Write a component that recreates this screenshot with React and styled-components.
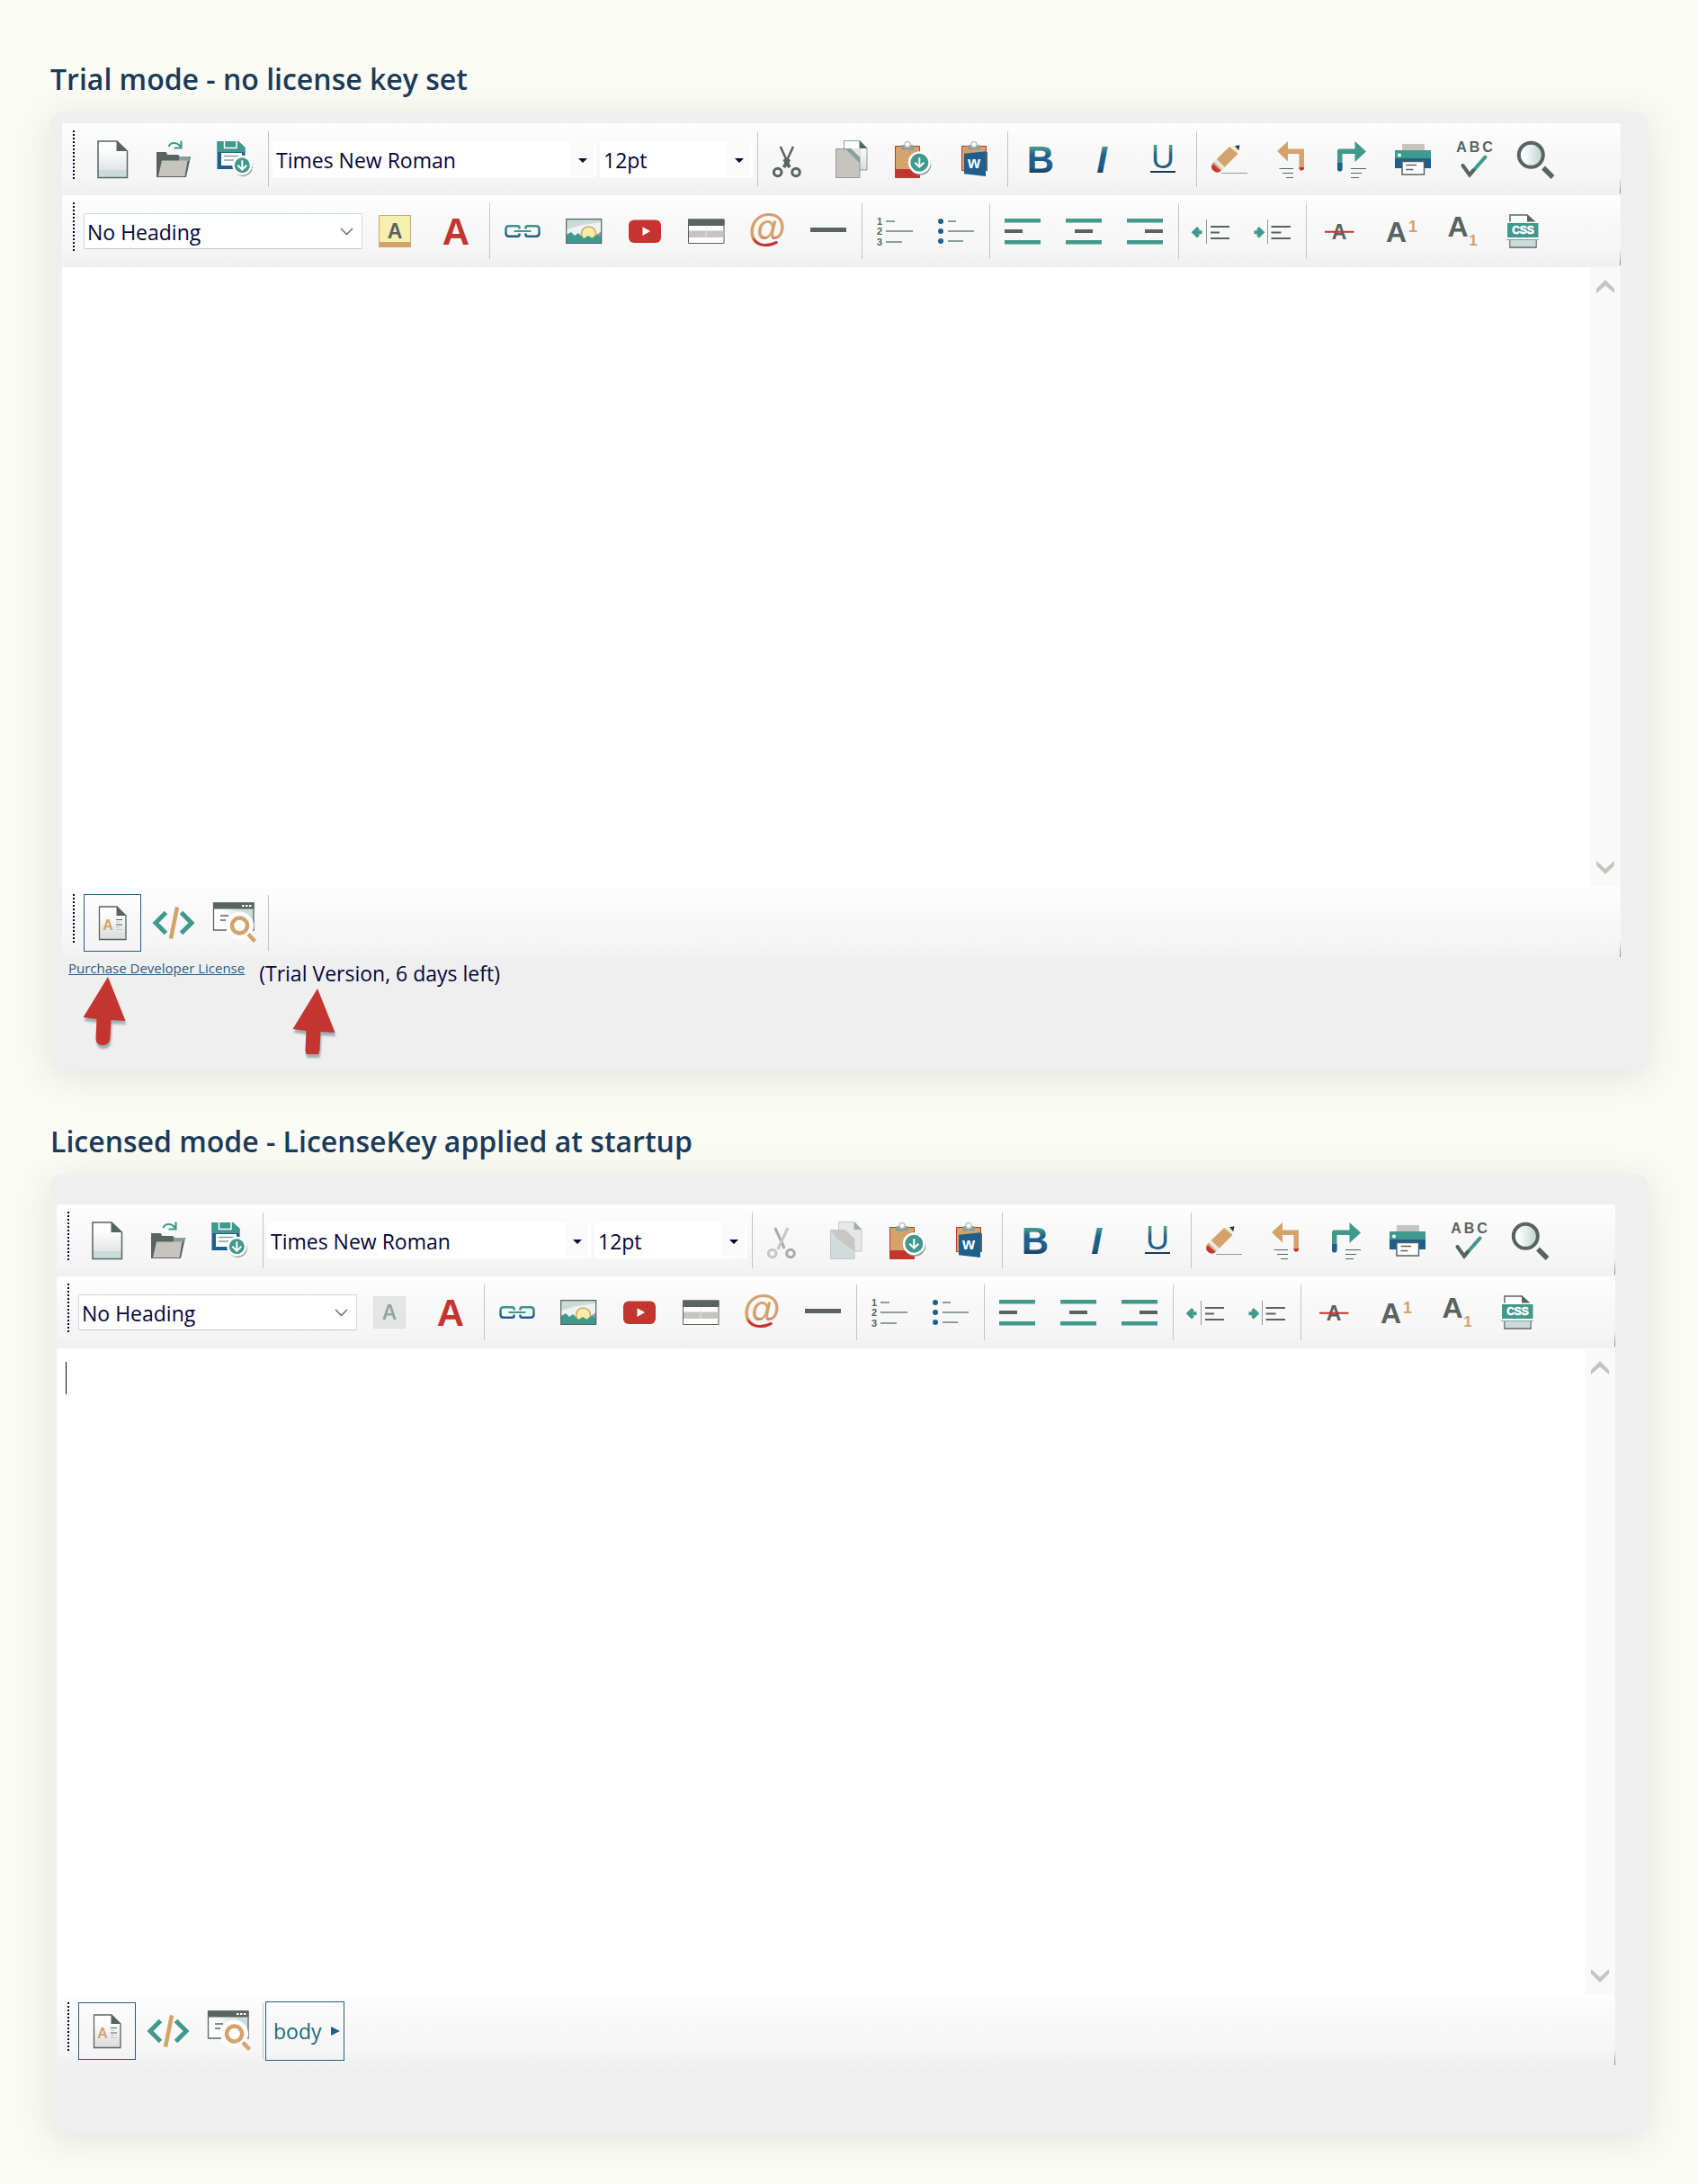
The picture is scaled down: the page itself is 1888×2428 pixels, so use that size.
import styled, { createGlobalStyle } from "styled-components"

const GlobalStyle = createGlobalStyle`
    :root {
        --ink: #05053a;
        --navy: #1b3a58;
        --blue: #1f5f8b;
        --teal: #3f998c;
        --slate: #576461;
        --steel: #8a9f9d;
        --stone: #c6c4be;
        --mist: #cbdbd9;
        --sand: #d4a26b;
        --red: #c5352f;
    }

    * {
        box-sizing: border-box;
    }

    body {
        margin: 0;
        background: #fafbf5;
        color: var(--ink);
        font-family: "Open Sans", "Noto Sans", sans-serif;
        font-size: 23px;
    }
`

const Page = styled.main`
    display: flex;
    flex-direction: column;
    gap: 53px;
    padding: 62px 56px 56px;
`

const Title = styled.h2`
    margin: 0 0 11px;
    color: var(--navy);
    font-size: 32px;
    font-weight: 600;
    line-height: 52px;
`

const Panel = styled.div`
    padding: ${({ $inset }) => $inset};
    border-radius: 12px;
    background: #efefef;
    box-shadow: 0 6px 40px rgba(70, 75, 40, 0.13);
`

const Toolbar = styled.div`
    display: flex;
    flex-wrap: wrap;
    align-items: center;
    gap: 4px;
    min-height: 80px;
    padding: 8px 12px;
    border-radius: 3px;
    background:
        linear-gradient(transparent, #7d8785) right bottom 2px / 1px 18px no-repeat,
        linear-gradient(#fefefe, #f8f8f8 40%, #f6f6f6 75%, #f0f0f0);
`

const Grip = styled.span`
    align-self: flex-start;
    width: 2px;
    height: 54px;
    margin-right: 6px;
    background: repeating-linear-gradient(var(--ink) 0 2px, transparent 2px 4px);
`

const Separator = styled.span`
    width: 2px;
    height: 62px;
    border-right: 1px solid var(--stone);
`

const ToolButton = styled.button`
    width: 64px;
    height: 64px;
    padding: 0;
    border: 1px solid ${({ $active }) => ($active ? "var(--blue)" : "transparent")};
    background: none;

    svg {
        display: block;
        width: 64px;
        height: 64px;
        margin: -1px;
    }

    &:disabled svg {
        opacity: 0.5;
    }
`

const TagButton = styled.button`
    display: flex;
    align-items: center;
    justify-content: space-between;
    width: 88px;
    height: 66px;
    margin: -2px;
    padding: 0 4px 0 8px;
    border: 1px solid var(--blue);
    background: none;
    color: #216a78;
    font: inherit;
`

const SelectBox = styled.label`
    display: grid;
    align-items: center;
    width: ${({ $width }) => $width}px;
    height: 40px;
    border: 1px solid ${({ $outlined }) => ($outlined ? "var(--mist)" : "transparent")};
    border-bottom-color: ${({ $outlined }) => ($outlined ? "var(--stone)" : "transparent")};
    border-radius: 2px;
    background: #fff;

    select, svg {
        grid-area: 1 / 1;
    }

    select {
        width: 100%;
        height: 38px;
        padding: 1px 30px 0 3px;
        border: 0;
        appearance: none;
        background: none;
        color: inherit;
        font: inherit;
    }

    svg {
        justify-self: end;
        pointer-events: none;
    }
`

const Editor = styled.div`
    position: relative;
    display: flex;
    height: ${({ $height }) => $height}px;
    background: #fff;

    textarea {
        flex: 1;
        padding: 12px 10px;
        border: 0;
        outline: 0;
        resize: none;
        background: none;
        font: 24px "Liberation Serif", serif;
    }
`

const Caret = styled.span`
    position: absolute;
    top: 15px;
    left: 10px;
    width: 1px;
    height: 36px;
    background: var(--ink);
`

const Scrollbar = styled.div`
    display: flex;
    flex-direction: column;
    justify-content: space-between;
    align-items: center;
    width: 34px;
    padding: 11px 0;
    background: #f9f9f9;

    svg {
        display: block;
    }
`

const Footer = styled.div`
    display: flex;
    gap: 16px;
    min-height: ${({ $height }) => $height}px;
    padding-left: 7px;
`

const FooterItem = styled.div`
    svg {
        display: block;
        margin-left: ${({ $arrow }) => $arrow}px;
        filter: drop-shadow(1px 4px 1px #8a9f9dcc);
    }
`

const LicenseLink = styled.a`
    display: block;
    color: var(--blue);
    font-size: 15px;
    line-height: 20px;
`

const TrialText = styled.p`
    margin: 0;
    line-height: 33px;
`

const DefsSvg = styled.svg`
    display: block;
    height: 0;
    margin-bottom: -53px;
`

const SharedDefs = () => (
    <DefsSvg aria-hidden="true">
        <defs>
            <linearGradient id="sheet" x2="0" y2="1">
                <stop offset="0.2" stopColor="#fff" />
                <stop offset="1" stopColor="#d9dcdb" />
            </linearGradient>
            <linearGradient id="letter" gradientUnits="userSpaceOnUse" x1="0" y1="16" x2="0" y2="48">
                <stop offset="0.1" stopColor="#3f998c" />
                <stop offset="0.35" stopColor="#1f5f8b" />
                <stop offset="0.75" stopColor="#1f5f8b" />
                <stop offset="1" stopColor="#1b3a58" />
            </linearGradient>
            <linearGradient id="chain" gradientUnits="userSpaceOnUse" x1="0" y1="25" x2="0" y2="40">
                <stop offset="0" stopColor="#3f998c" />
                <stop offset="0.8" stopColor="#1f5f8b" />
            </linearGradient>
            <linearGradient id="mail" gradientUnits="userSpaceOnUse" x1="0" y1="38" x2="0" y2="43">
                <stop offset="0" stopColor="#d4a26b" />
                <stop offset="1" stopColor="#c5352f" />
            </linearGradient>
            <linearGradient id="glass" x2="1" y2="0">
                <stop offset="0.2" stopColor="#fff" />
                <stop offset="0.8" stopColor="#cbdbd9" />
            </linearGradient>
        </defs>
    </DefsSvg>
)

const Glyph = ({ x = 32, y, size, fill = "var(--slate)", weight = 700, children, ...rest }) => (
    <text x={x} y={y} fontSize={size} fontWeight={weight} fill={fill} textAnchor="middle" fontFamily="Liberation Sans, Arial, sans-serif" {...rest}>
        {children}
    </text>
)

const Badge = ({ cx, cy, r }) => (
    <>
        <circle cx={cx + 1} cy={cy + 2} r={r + 2} fill="var(--steel)" />
        <circle cx={cx} cy={cy} r={r + 2.5} fill="#fff" />
        <circle cx={cx} cy={cy} r={r} fill="var(--teal)" />
        <path d={`M${cx} ${cy - 5.5}v10M${cx - 5} ${cy}l5 5 5-5`} fill="none" stroke="#fff" strokeWidth="2" />
    </>
)

const Clip = ({ x }) => (
    <>
        <path d={`M${x - 7} 21.500v-4q0-1.500 2-1.500h10q2 0 2 1.500v4z`} fill="var(--steel)" />
        <circle cx={x} cy="15.500" r="3" fill="#fff" stroke="var(--stone)" strokeWidth="1.500" />
    </>
)

const icons = {
    new: (
        <>
            <path d="M16 12h21l11.500 11v29.500H16z" fill="url(#sheet)" />
            <path d="M16 44h32v8H16z" fill="var(--mist)" />
            <path d="M16 12h21l11.500 11v29.500H16z" fill="none" stroke="var(--slate)" strokeWidth="1.500" />
            <path d="M36.500 11.500v11.500h12z" fill="var(--slate)" />
        </>
    ),
    open: (
        <>
            <path d="M13 24h11l1 3h12l2 2h12l-5 23H13z" fill="var(--slate)" />
            <path d="M38 29h12l-1 5H38z" fill="var(--steel)" />
            <path d="M19 33.500h28.500l-3 17.500H15z" fill="var(--stone)" />
            <path d="M26.500 18q1.500-4 6-4t7 4M40.500 11.500v8h-8" fill="none" stroke="var(--teal)" strokeWidth="2.200" />
        </>
    ),
    save: (
        <>
            <path d="M12.500 12H36l7.500 7v24h-31z" fill="var(--blue)" />
            <path d="M12.500 12H36l7.500 7v5h-31z" fill="var(--teal)" />
            <path d="M20.500 12v7.500H34V12" fill="var(--teal)" stroke="#fff" strokeWidth="1.500" />
            <path d="M17 25h23v14H17z" fill="#fff" />
            <path d="M20 28.500h17M20 33h11" stroke="var(--steel)" strokeWidth="1.500" />
            <Badge cx={40.3} cy={38.7} r={8.5} />
        </>
    ),
    cut: (
        <g fill="none" stroke="var(--slate)">
            <path d="M20.700 18l9.300 20M35 18l-9.300 20" strokeWidth="2.500" />
            <path d="M25 32l6 9M30.500 32l-6 9" strokeWidth="4" />
            <circle cx="17.700" cy="46.500" r="4.300" strokeWidth="3" />
            <circle cx="38" cy="46.500" r="4.300" strokeWidth="3" />
        </g>
    ),
    copy: (
        <>
            <path d="M23.500 11.500H41l8 8.500v24H23.500z" fill="url(#sheet)" stroke="var(--steel)" />
            <path d="M40.500 11v9H49.500z" fill="var(--slate)" />
            <path d="M14.500 20.500H41v32H14.500z" fill="var(--stone)" stroke="var(--steel)" />
            <path d="M25 20.500l16 16v-7l-9-9z" fill="var(--steel)" />
            <path d="M31 20h10.500v10z" fill="#e2e7e6" />
        </>
    ),
    paste: (
        <>
            <path d="M12.500 17.500h27v35h-27z" fill="var(--sand)" stroke="var(--red)" />
            <path d="M12.500 43h27v9.500h-27z" fill="var(--red)" />
            <Clip x={26} />
            <Badge cx={39.3} cy={35.7} r={10} />
        </>
    ),
    pasteWord: (
        <>
            <path d="M18.500 17.500h27v27h-27z" fill="var(--sand)" stroke="var(--red)" />
            <path d="M44 24h3v21h-3z" fill="var(--slate)" />
            <Clip x={32} />
            <path d="M21 25.700l24-2.400v27.700l-24-2.700z" fill="var(--blue)" />
            <Glyph y="42" size="18" fill="#fff">w</Glyph>
        </>
    ),
    bold: <Glyph y="46.500" size="42" fill="url(#letter)">B</Glyph>,
    italic: <Glyph y="46.500" size="42" fill="url(#letter)" fontStyle="italic">I</Glyph>,
    underline: (
        <>
            <Glyph y="42" size="36" weight="400" fill="url(#letter)">U</Glyph>
            <path d="M18 46h28" stroke="var(--navy)" strokeWidth="2" />
        </>
    ),
    pencil: (
        <>
            <path d="M23 47.500h29" stroke="var(--steel)" />
            <path d="M32 18l11-1.500-2.500 10z" fill="#f3ead2" />
            <path d="M38 17.200l5.500-1-1.200 6z" fill="var(--navy)" />
            <path d="M32 18l9.500 8L22 45.500q-4 3-8-1t-1-8z" fill="var(--sand)" />
            <path d="M14 37.500l8.500 7.500q-4 3-8.500-.5-3.500-3.500 0-7z" fill="var(--red)" />
            <path d="M17.500 31.500l9.500 9.500-3 3-9.500-9.500z" fill="#e6e8e6" />
        </>
    ),
    undo: (
        <>
            <path d="M17 23l12-11v8.500h18V42h-5.500V26H29v8.500z" fill="var(--sand)" />
            <path d="M41.500 41H47v2l-2 1.500h-2l-1.500-1.500z" fill="var(--red)" />
            <path d="M19.500 42.500H35M23 47.500h12M27 52.500h8" stroke="var(--slate)" />
        </>
    ),
    redo: (
        <>
            <path d="M48 23.500L35.500 12v8.500H18L16 22v20h5.500V26h14v9z" fill="var(--teal)" />
            <path d="M16 36h5.500v8l-1.500 1.500h-2.500L16 44z" fill="var(--blue)" />
            <path d="M31 42.500h17M31 47.500h12M31 52.500h9" stroke="var(--slate)" />
        </>
    ),
    print: (
        <>
            <path d="M20 15h25v8H20z" fill="var(--stone)" />
            <path d="M12 22h40v20H12z" fill="var(--blue)" />
            <path d="M12 22h40v9H12z" fill="var(--teal)" />
            <circle cx="17" cy="27.500" r="2" fill="#fff" />
            <path d="M20 34.500h24.500V49H20z" fill="#fff" stroke="var(--slate)" strokeWidth="1.500" />
            <path d="M24.500 38.500H36M24.500 43.500h8" stroke="var(--slate)" strokeWidth="1.500" />
        </>
    ),
    spell: (
        <>
            <Glyph x="18" y="23.500" size="16">A</Glyph>
            <Glyph x="32.500" y="23.500" size="16">B</Glyph>
            <Glyph x="47" y="23.500" size="16">C</Glyph>
            <path d="M27 49.500l17.500-20" stroke="var(--teal)" strokeWidth="4" strokeLinecap="round" />
            <path d="M19.500 39l7.500 10.500 4-5" fill="none" stroke="var(--slate)" strokeWidth="4" strokeLinecap="round" />
        </>
    ),
    find: (
        <>
            <circle cx="27.300" cy="27.300" r="13.500" fill="url(#glass)" stroke="var(--slate)" strokeWidth="4" />
            <path d="M41 41.500L51.500 52" stroke="var(--slate)" strokeWidth="5.500" />
        </>
    ),
    highlight: (
        <>
            <path d="M14.500 14.500h35v35h-35z" fill="#f6f0ae" stroke="var(--sand)" />
            <path d="M14 44h36v6H14z" fill="var(--sand)" />
            <Glyph y="40" size="23">A</Glyph>
        </>
    ),
    color: <Glyph y="46.500" size="42" fill="var(--red)">A</Glyph>,
    link: (
        <g fill="none" stroke="url(#chain)" strokeWidth="2.500">
            <path d="M28.500 29.500V28q0-1.700-2-1.700H17q-3.500 0-3.500 3.500v4.500q0 3.500 3.500 3.500h9.500q2 0 2-1.700v-1.600" />
            <path d="M35.500 29.500V28q0-1.700 2-1.700H47q3.500 0 3.500 3.500v4.500q0 3.500-3.500 3.500h-9.500q-2 0-2-1.700v-1.600" />
            <path d="M22.500 31h19v2h-19z" fill="var(--teal)" stroke="none" />
        </g>
    ),
    image: (
        <>
            <path d="M13 19h39v26H13z" fill="#eef3f1" />
            <path d="M13 19h39v3L30 25l-17 5z" fill="var(--mist)" />
            <circle cx="37.500" cy="35" r="8" fill="#f6eda4" stroke="var(--sand)" strokeWidth="1.500" />
            <path d="M52 32v13H36l7-7z" fill="var(--steel)" />
            <path d="M13 36l5-3 4 4 4-3 6 6 5-3 5 3 5-4 5 3v6H13z" fill="var(--teal)" />
            <path d="M12.700 18.700h39v26.800h-39z" fill="none" stroke="var(--slate)" strokeWidth="1.200" />
        </>
    ),
    video: (
        <>
            <rect x="14" y="19.500" width="36" height="25.500" rx="6" fill="var(--red)" />
            <path d="M29.500 27.300L38 32l-8.500 5z" fill="#fff" />
        </>
    ),
    table: (
        <>
            <path d="M12.500 19h39.500v26.500H12.500z" fill="#fff" stroke="var(--slate)" />
            <path d="M12 18.500h40.500V26H12z" fill="var(--slate)" />
            <path d="M13 31.500h38.500V39H13z" fill="var(--stone)" />
            <path d="M32 26v13" stroke="#e4e4e0" />
        </>
    ),
    at: <Glyph y="43" size="43" fill="url(#mail)">@</Glyph>,
    rule: <path d="M12 28h40v5H12z" fill="var(--slate)" />,
    numbered: (
        <>
            <Glyph x="15" y="24.500" size="11">1</Glyph>
            <Glyph x="15" y="36" size="11">2</Glyph>
            <Glyph x="15" y="47.500" size="11">3</Glyph>
            <path d="M22 21h10M22 32h30M22 44h18" stroke="var(--steel)" strokeWidth="2" />
        </>
    ),
    bullets: (
        <>
            <g fill="var(--blue)">
                <circle cx="15" cy="21" r="3" />
                <circle cx="15" cy="32" r="3" />
                <circle cx="15" cy="43" r="3" />
            </g>
            <path d="M23 21h9M23 32h29M23 43h17" stroke="var(--steel)" strokeWidth="2" />
        </>
    ),
    left: (
        <>
            <path d="M12 18h40v4.500H12zM12 42h40v4.500H12z" fill="var(--teal)" />
            <path d="M12 30h20v4H12z" fill="var(--slate)" />
        </>
    ),
    center: (
        <>
            <path d="M12 18h40v4.500H12zM12 42h40v4.500H12z" fill="var(--teal)" />
            <path d="M22 30h20v4H22z" fill="var(--slate)" />
        </>
    ),
    right: (
        <>
            <path d="M12 18h40v4.500H12zM12 42h40v4.500H12z" fill="var(--teal)" />
            <path d="M32 30h20v4H32z" fill="var(--slate)" />
        </>
    ),
    outdent: (
        <>
            <path d="M17.500 28.500l-5 4.800 5 4.800M12.500 33.300h9" fill="none" stroke="var(--teal)" strokeWidth="4" />
            <path d="M26.500 19v27" stroke="var(--steel)" />
            <path d="M31 27h21M31 33.500h10M31 40h21" stroke="var(--slate)" strokeWidth="2" />
        </>
    ),
    indent: (
        <>
            <path d="M15.500 28.500l5 4.800-5 4.800M20.500 33.300h-9" fill="none" stroke="var(--teal)" strokeWidth="4" />
            <path d="M26.500 19v27" stroke="var(--steel)" />
            <path d="M30.500 27h21.500M30.500 33.500h11M30.500 40h21.500" stroke="var(--slate)" strokeWidth="2" />
        </>
    ),
    strike: (
        <>
            <Glyph y="40.500" size="23">A</Glyph>
            <path d="M16 32.700h32.500" stroke="var(--red)" strokeWidth="2" />
        </>
    ),
    superscript: (
        <>
            <Glyph x="27.500" y="44" size="32">A</Glyph>
            <Glyph x="46" y="33.300" size="18" fill="var(--sand)">1</Glyph>
        </>
    ),
    subscript: (
        <>
            <Glyph x="28" y="38.300" size="32">A</Glyph>
            <Glyph x="45" y="47.700" size="17" fill="var(--sand)">1</Glyph>
        </>
    ),
    css: (
        <>
            <path d="M18 14h19l10 9v27H18z" fill="#fff" stroke="var(--slate)" strokeWidth="1.500" />
            <path d="M37 13.500v9h10z" fill="var(--slate)" />
            <path d="M18.500 42h28v7h-28z" fill="var(--mist)" />
            <path d="M14 21.500h36v20.500H14z" fill="#fff" />
            <path d="M15 23h34.500v16H15z" fill="var(--teal)" />
            <path d="M14 41.500h36" stroke="var(--steel)" />
            <Glyph x="32.500" y="35.200" size="12" fill="#fff" stroke="#fff" strokeWidth="0.600">CSS</Glyph>
        </>
    ),
    design: (
        <>
            <path d="M17.500 14H37l10 10v26.500H17.500z" fill="url(#sheet)" stroke="var(--slate)" strokeWidth="1.300" />
            <path d="M36.500 13.500V24H47.500z" fill="var(--slate)" />
            <Glyph x="27" y="40" size="16" fill="var(--sand)">A</Glyph>
            <path d="M36 28.500h7M36 34h7" stroke="var(--slate)" />
            <path d="M36 31.200h4M36 36.700h4M36 39.500h7" stroke="var(--stone)" />
        </>
    ),
    html: (
        <>
            <path d="M23.500 20.500L12 32l11.500 11.500M40.500 20.500L52 32l-11.500 11.500" fill="none" stroke="var(--teal)" strokeWidth="5" />
            <path d="M36 14.500L29 49.500" stroke="var(--sand)" strokeWidth="4.500" />
        </>
    ),
    preview: (
        <>
            <path d="M8.500 10H53v30H8.500z" fill="url(#glass)" stroke="var(--slate)" strokeWidth="1.300" />
            <path d="M8 9.500h45.500v7H8z" fill="var(--slate)" />
            <path d="M40 13h2.500M44 13h2.500M48 13h2.500" stroke="#fff" strokeWidth="2" />
            <path d="M16 24h9M16 29h6" stroke="var(--slate)" strokeWidth="1.500" />
            <circle cx="37.500" cy="35" r="15.500" fill="#fff" />
            <circle cx="37.500" cy="35" r="8.500" fill="#fff" stroke="var(--sand)" strokeWidth="4.500" />
            <path d="M47 44.500l7.500 8" stroke="var(--sand)" strokeWidth="4.500" />
        </>
    ),
}

// greyed versions, drawn at half opacity by the disabled button
const disabledIcons = {
    cut: (
        <g fill="none">
            <path d="M20.700 18l9.300 20 1 3" stroke="var(--slate)" strokeWidth="3" />
            <circle cx="38" cy="46.500" r="4.300" stroke="var(--slate)" strokeWidth="3" />
            <path d="M35 18l-9.300 20-2 4" stroke="#999791" strokeWidth="3" />
            <circle cx="17.700" cy="46.500" r="4.300" stroke="#999791" strokeWidth="3" />
        </g>
    ),
    copy: (
        <>
            <path d="M23.500 11.500H41l8 8.500v24H23.500z" fill="#d5dad8" stroke="#999791" />
            <path d="M40.500 11v9H49.500z" fill="var(--slate)" />
            <path d="M14.500 20.500H41v32H14.500z" fill="#a9c3c0" stroke="#999791" />
            <path d="M15 21h17l9 9v14L22 30z" fill="#999791" />
            <path d="M31 20h10.500v10z" fill="#d5dad8" />
        </>
    ),
    highlight: (
        <>
            <path d="M14.500 14.500h35v35h-35z" fill="#d0d6d4" stroke="#b9ccc9" />
            <Glyph y="40" size="23" fill="#3a5550">A</Glyph>
        </>
    ),
}

const Tools = ({ items, off = [], active }) =>
    items.map(([name, label]) => {
        const disabled = off.includes(name)
        return (
            <ToolButton key={name} type="button" aria-label={label} title={label} disabled={disabled} $active={name === active}>
                <svg viewBox="0 0 64 64" aria-hidden="true">{disabled ? disabledIcons[name] : icons[name]}</svg>
            </ToolButton>
        )
    })

const Combo = ({ label, value, width }) => (
    <SelectBox $width={width}>
        <select aria-label={label} defaultValue={value}>
            <option>{value}</option>
        </select>
        <svg width="28" height="38" aria-hidden="true">
            <path d="M0 0h26v37H0z" fill="#fafafa" />
            <path d="M9 18h10l-5 5z" fill="var(--ink)" />
        </svg>
    </SelectBox>
)

const HeadingSelect = () => (
    <SelectBox $width={310} $outlined>
        <select aria-label="Heading" defaultValue="No Heading">
            <option>No Heading</option>
        </select>
        <svg width="32" height="38" aria-hidden="true">
            <path d="M9 16l6.500 6.500L22 16" fill="none" stroke="var(--slate)" strokeWidth="1.300" />
        </svg>
    </SelectBox>
)

const fileTools = [["new", "New"], ["open", "Open"], ["save", "Save"]]
const clipboardTools = [["cut", "Cut"], ["copy", "Copy"], ["paste", "Paste"], ["pasteWord", "Paste from Word"]]
const styleTools = [["bold", "Bold"], ["italic", "Italic"], ["underline", "Underline"]]
const editTools = [["pencil", "Clear formatting"], ["undo", "Undo"], ["redo", "Redo"], ["print", "Print"], ["spell", "Spell check"], ["find", "Find"]]
const colorTools = [["highlight", "Highlight"], ["color", "Font color"]]
const insertTools = [["link", "Link"], ["image", "Image"], ["video", "Video"], ["table", "Table"], ["at", "Symbol"], ["rule", "Horizontal rule"]]
const listTools = [["numbered", "Numbered list"], ["bullets", "Bulleted list"]]
const alignTools = [["left", "Align left"], ["center", "Align center"], ["right", "Align right"]]
const indentTools = [["outdent", "Outdent"], ["indent", "Indent"]]
const scriptTools = [["strike", "Strikethrough"], ["superscript", "Superscript"], ["subscript", "Subscript"], ["css", "Style sheet"]]
const viewTools = [["design", "Design"], ["html", "HTML"], ["preview", "Preview"]]

const HtmlEditor = ({ height, off, caret, tag }) => (
    <>
        <Toolbar>
            <Grip />
            <Tools items={fileTools} />
            <Separator />
            <Combo label="Font" value="Times New Roman" width={360} />
            <Combo label="Font size" value="12pt" width={170} />
            <Separator />
            <Tools items={clipboardTools} off={off} />
            <Separator />
            <Tools items={styleTools} />
            <Separator />
            <Tools items={editTools} />
        </Toolbar>
        <Toolbar>
            <Grip />
            <HeadingSelect />
            <Tools items={colorTools} off={off} />
            <Separator />
            <Tools items={insertTools} />
            <Separator />
            <Tools items={listTools} />
            <Separator />
            <Tools items={alignTools} />
            <Separator />
            <Tools items={indentTools} />
            <Separator />
            <Tools items={scriptTools} />
        </Toolbar>
        <Editor $height={height}>
            <textarea aria-label="Document" />
            {caret && <Caret />}
            <Scrollbar>
                <svg width="20" height="20" aria-hidden="true">
                    <path d="M0 13L10 3l10 10v5L10 9.500 0 18z" fill="var(--stone)" />
                </svg>
                <svg width="20" height="20" aria-hidden="true">
                    <path d="M0 2l10 9L20 2v5L10 17 0 7z" fill="var(--stone)" />
                </svg>
            </Scrollbar>
        </Editor>
        <Toolbar>
            <Grip />
            <Tools items={viewTools} active="design" />
            <Separator />
            {tag && (
                <TagButton type="button">
                    {tag}
                    <svg width="10" height="10" aria-hidden="true">
                        <path d="M0 0l10 5-10 5z" fill="var(--blue)" />
                    </svg>
                </TagButton>
            )}
        </Toolbar>
    </>
)

const Arrow = ({ height }) => (
    <svg width="54" height={height} aria-hidden="true">
        <path d="M30 0L2.500 45l15 2-1 21q0 8 7.500 8t8.500-8l1-20 16 1z" fill="var(--red)" />
    </svg>
)

const App = () => {
    return (
        <Page>
            <GlobalStyle />
            <SharedDefs />
            <section>
                <Title>Trial mode - no license key set</Title>
                <Panel $inset="12px 30px 0 13px">
                    <HtmlEditor height={689} />
                    <Footer $height={124}>
                        <FooterItem $arrow={14}>
                            <LicenseLink href="#purchase">Purchase Developer License</LicenseLink>
                            <Arrow height={82} />
                        </FooterItem>
                        <FooterItem $arrow={35}>
                            <TrialText>(Trial Version, 6 days left)</TrialText>
                            <Arrow height={73} />
                        </FooterItem>
                    </Footer>
                </Panel>
            </section>
            <section>
                <Title>Licensed mode - LicenseKey applied at startup</Title>
                <Panel $inset="33px 36px 0 7px">
                    <HtmlEditor height={719} off={["cut", "copy", "highlight"]} caret tag="body" />
                    <Footer $height={74} />
                </Panel>
            </section>
        </Page>
    )
}

export default App
